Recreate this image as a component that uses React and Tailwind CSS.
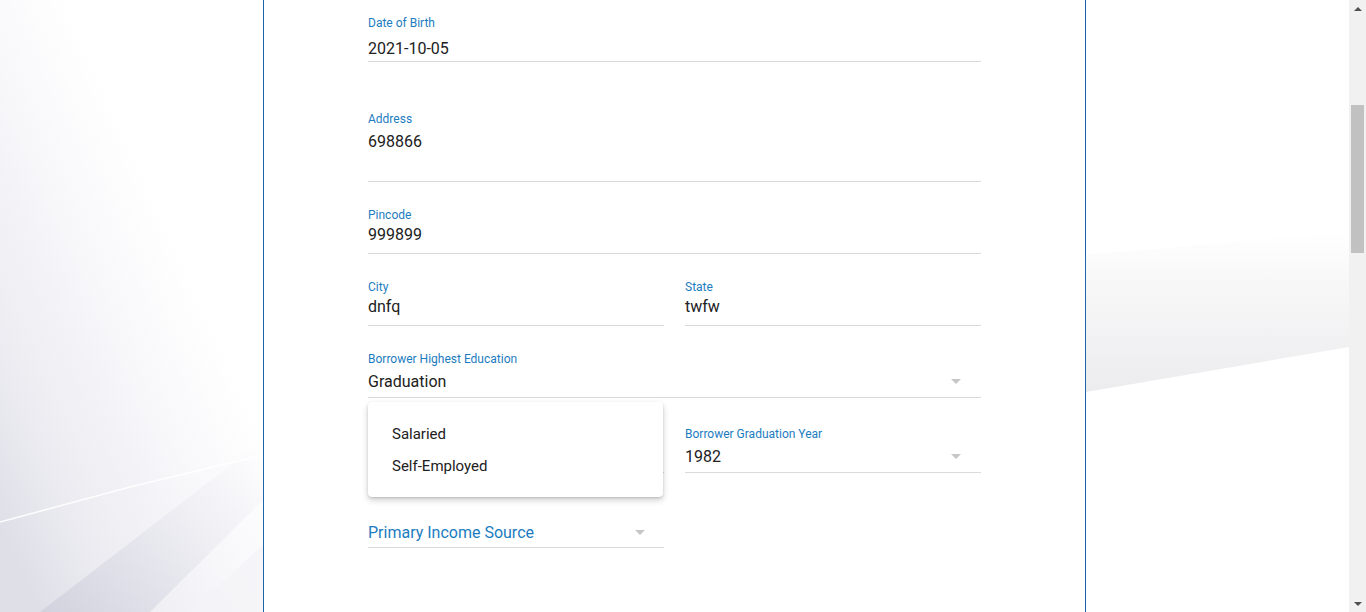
import React from 'react';

const labelCls = 'text-[12px] leading-[14px] text-[#1c7cc0]';
const valueCls = 'text-[16px] leading-[19px] text-[#212121]';
const lineCls = 'border-b border-[#dadada]';

const Caret = ({ className = '' }) => (
    <span className={`inline-block h-0 w-0 border-x-[5px] border-t-[5px] border-x-transparent border-t-[#c6c6c6] ${className}`}></span>
);

const LeftBackdrop = () => (
    <svg className="h-full w-full" viewBox="0 0 263 612" preserveAspectRatio="none">
        <defs>
            <linearGradient id="lg1" x1="0.7" y1="0.42" x2="0.15" y2="1">
                <stop offset="0" stopColor="#ffffff" />
                <stop offset="0.35" stopColor="#f7f7fa" />
                <stop offset="0.75" stopColor="#ebebf1" />
                <stop offset="1" stopColor="#dfdfe8" />
            </linearGradient>
            <linearGradient id="lg2" x1="0" y1="1" x2="1" y2="0">
                <stop offset="0" stopColor="#cfcfdc" stopOpacity="0.8" />
                <stop offset="1" stopColor="#e6e6ee" stopOpacity="0" />
            </linearGradient>
        </defs>
        <rect width="263" height="612" fill="url(#lg1)" />
        <polygon points="40,612 150,612 263,500 263,440" fill="url(#lg2)" />
        <polygon points="190,612 263,612 263,545" fill="#f4f4f8" opacity="0.8" />
        <path d="M0 522 L130 487 L263 455" stroke="#ffffff" strokeWidth="1.6" fill="none" opacity="0.9" />
    </svg>
);

const RightBackdrop = () => (
    <svg className="h-full w-full" viewBox="0 0 263 612" preserveAspectRatio="none">
        <defs>
            <linearGradient id="rg1" x1="0" y1="230" x2="0" y2="392" gradientUnits="userSpaceOnUse">
                <stop offset="0" stopColor="#ffffff" />
                <stop offset="0.3" stopColor="#f8f8f9" />
                <stop offset="1" stopColor="#ececee" />
            </linearGradient>
        </defs>
        <rect width="263" height="612" fill="#ffffff" />
        <polygon points="0,255 263,232 263,347 0,392" fill="url(#rg1)" />
    </svg>
);

const Scrollbar = () => (
    <div className="flex w-[17px] shrink-0 flex-col bg-[#f1f1f1]">
        <div className="flex h-[17px] items-center justify-center">
            <span className="h-0 w-0 border-x-[4px] border-b-[4px] border-x-transparent border-b-[#505050]"></span>
        </div>
        <div className="h-[88px]"></div>
        <div className="mx-[2px] h-[148px] bg-[#c1c1c1]"></div>
        <div className="flex-1"></div>
        <div className="flex h-[17px] items-center justify-center">
            <span className="h-0 w-0 border-x-[4px] border-t-[4px] border-x-transparent border-t-[#505050]"></span>
        </div>
    </div>
);

const App = () => {
    const incomeOptions = ['Salaried', 'Self-Employed'];

    return (
        <div className="flex h-[612px] w-[1366px] overflow-hidden bg-white font-['Roboto',sans-serif]">
            <div className="w-[263px] shrink-0">
                <LeftBackdrop />
            </div>

            <div className="w-[823px] shrink-0 border-x border-[#1b65a8] bg-white px-[104px] pt-[16px]">
                {/* Date of Birth */}
                <div className={lineCls}>
                    <p className={labelCls}>Date of Birth</p>
                    <p className={`${valueCls} mt-[9px] pb-[3px]`}>2021-10-05</p>
                </div>

                {/* Address */}
                <div className={`${lineCls} mt-[49px] pt-[1px]`}>
                    <p className={labelCls}>Address</p>
                    <p className={`${valueCls} mt-[6px] h-[38px] mb-[11px]`}>698866</p>
                </div>

                {/* Pincode */}
                <div className={`${lineCls} mt-[25px] pt-[1px]`}>
                    <p className={labelCls}>Pincode</p>
                    <p className={`${valueCls} mt-[3px] pb-[9px]`}>999899</p>
                </div>

                <div className="mt-[25px] grid grid-cols-2 gap-x-[21px]">
                    <div className={`${lineCls} pt-[1px]`}>
                        <p className={labelCls}>City</p>
                        <p className={`${valueCls} mt-[3px] pb-[9px]`}>dnfq</p>
                    </div>
                    <div className={`${lineCls} pt-[1px]`}>
                        <p className={labelCls}>State</p>
                        <p className={`${valueCls} mt-[3px] pb-[9px]`}>twfw</p>
                    </div>
                </div>

                {/* Education */}
                <div className={`${lineCls} mt-[25px] pt-[1px]`}>
                    <p className={labelCls}>Borrower Highest Education</p>
                    <div className="mt-[6px] flex items-center justify-between pb-[6px]">
                        <p className={valueCls}>Graduation</p>
                        <Caret className="mr-[20px]" />
                    </div>
                </div>

                <div className="mt-[28px] grid grid-cols-2 gap-x-[21px]">
                    <div className="relative">
                        <div className={`${lineCls} pt-[1px]`}>
                            <p className={labelCls}>&nbsp;</p>
                            <div className="mt-[6px] flex items-center justify-between pb-[6px]">
                                <p className={valueCls}>&nbsp;</p>
                                <Caret className="mr-[18px]" />
                            </div>
                        </div>
                        <div className="absolute left-0 top-[-24px] z-10 h-[95px] w-[295px] rounded-[4px] bg-white pt-[16px] shadow-[0_3px_6px_rgba(0,0,0,0.2),0_1px_2px_rgba(0,0,0,0.12)]">
                            {incomeOptions.map((opt) => (
                                <div key={opt} className="flex h-[32px] items-center pl-[24px] text-[15px] text-[#212121]">
                                    {opt}
                                </div>
                            ))}
                        </div>
                    </div>
                    <div className={`${lineCls} pt-[1px]`}>
                        <p className={labelCls}>Borrower Graduation Year</p>
                        <div className="mt-[6px] flex items-center justify-between pb-[6px]">
                            <p className={valueCls}>1982</p>
                            <Caret className="mr-[20px]" />
                        </div>
                    </div>
                </div>

                <div className="mt-[27px] grid grid-cols-2 gap-x-[21px]">
                    <div className={lineCls}>
                        <div className="mt-[23px] flex items-center justify-between pb-[5px]">
                            <p className="text-[16px] leading-[19px] text-[#1c7cc0]">Primary Income Source</p>
                            <Caret className="mr-[19px]" />
                        </div>
                    </div>
                    <div></div>
                </div>
            </div>

            <div className="flex-1">
                <RightBackdrop />
            </div>

            <Scrollbar />
        </div>
    );
};

export default App;
